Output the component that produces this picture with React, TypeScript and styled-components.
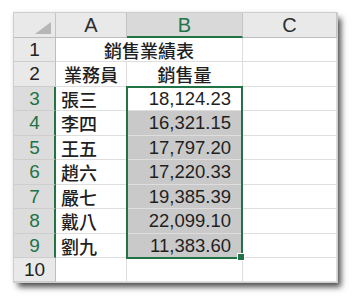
import React from "react";
import styled, { createGlobalStyle } from "styled-components";

const GREEN = "#217346";

const colWidths = [42, 71, 116, 94];
const headerHeight = 25;
const rowHeights = [24, 25, 24, 25, 24, 25, 24, 25, 24, 24];

const rows: { name: string; value: string }[] = [
  { name: "張三", value: "18,124.23" },
  { name: "李四", value: "16,321.15" },
  { name: "王五", value: "17,797.20" },
  { name: "趙六", value: "17,220.33" },
  { name: "嚴七", value: "19,385.39" },
  { name: "戴八", value: "22,099.10" },
  { name: "劉九", value: "11,383.60" },
];

const GlobalStyle = createGlobalStyle`
  html, body {
    margin: 0;
    padding: 0;
    background: #ffffff;
  }
  body {
    font-family: "Liberation Sans", "Noto Sans CJK TC", sans-serif;
  }
`;

const Page = styled.div`
  width: 360px;
  height: 306px;
  padding: 13px 0 0 14px;
  box-sizing: border-box;
  background: #ffffff;
`;

const Sheet = styled.div`
  position: relative;
  display: grid;
  grid-template-columns: ${colWidths.map((w) => `${w}px`).join(" ")};
  grid-template-rows: ${headerHeight}px ${rowHeights.map((h) => `${h}px`).join(" ")};
  width: ${colWidths.reduce((a, b) => a + b, 0)}px;
  background: #ffffff;
  box-shadow: 4px 5px 6px rgba(0, 0, 0, 0.7), -1px -1px 4px rgba(0, 0, 0, 0.08);
  outline: 1px solid #cfcfcf;
`;

const HeaderCell = styled.div<{ $selected?: boolean }>`
  box-sizing: border-box;
  display: flex;
  align-items: center;
  justify-content: center;
  background: ${(p) => (p.$selected ? "#d9d9d9" : "#e9e9e9")};
  border-right: 1px solid #c4c4c4;
  border-bottom: ${(p) => (p.$selected ? `2px solid ${GREEN}` : "1px solid #bdbdbd")};
  color: ${(p) => (p.$selected ? GREEN : "#2e2e2e")};
  font-family: "Liberation Sans", sans-serif;
  font-size: 20px;
  padding-top: 1px;
`;

const Corner = styled.div`
  position: relative;
  box-sizing: border-box;
  background: #e9e9e9;
  border-right: 1px solid #c4c4c4;
  border-bottom: 1px solid #bdbdbd;
`;

const CornerTriangle = styled.div`
  position: absolute;
  right: 4px;
  bottom: 3px;
  width: 0;
  height: 0;
  border-left: 16px solid transparent;
  border-bottom: 12px solid #b6b6b6;
`;

const RowHeader = styled.div<{ $selected?: boolean }>`
  box-sizing: border-box;
  display: flex;
  align-items: center;
  justify-content: center;
  background: ${(p) => (p.$selected ? "#dcdcdc" : "#e9e9e9")};
  border-bottom: 1px solid #cdcdcd;
  border-right: ${(p) => (p.$selected ? `2px solid ${GREEN}` : "1px solid #bdbdbd")};
  color: ${(p) => (p.$selected ? GREEN : "#222222")};
  font-family: "Liberation Sans", sans-serif;
  font-size: 19px;
  padding-left: ${(p) => (p.$selected ? "1px" : "0")};
`;

const Cell = styled.div<{ $align?: "left" | "center" | "right"; $fill?: boolean; $span?: number }>`
  box-sizing: border-box;
  display: flex;
  align-items: center;
  justify-content: ${(p) =>
    p.$align === "right" ? "flex-end" : p.$align === "center" ? "center" : "flex-start"};
  grid-column: ${(p) => (p.$span ? `span ${p.$span}` : "auto")};
  background: ${(p) => (p.$fill ? "#c9c9c9" : "#ffffff")};
  border-right: 1px solid #dedede;
  border-bottom: 1px solid #dedede;
  padding: 0 ${(p) => (p.$align === "right" ? "11px" : "0")} 0
    ${(p) => (p.$align === "left" ? "5px" : "0")};
  color: #1f1f1f;
  font-family: "Noto Sans CJK TC", "Liberation Sans", sans-serif;
  font-size: 18px;
  font-weight: 500;
  white-space: nowrap;
`;

const Number = styled.span`
  font-family: "Liberation Sans", sans-serif;
  font-size: 18.5px;
  font-weight: 400;
`;

const Selection = styled.div`
  position: absolute;
  box-sizing: border-box;
  border: 2px solid ${GREEN};
  pointer-events: none;
`;

const FillHandle = styled.div`
  position: absolute;
  right: -4px;
  bottom: -4px;
  width: 6px;
  height: 6px;
  background: ${GREEN};
  border: 1px solid #ffffff;
`;

const App: React.FC = () => {
  const selTop = headerHeight + rowHeights[0] + rowHeights[1] - 1;
  const selHeight = rowHeights.slice(2, 9).reduce((a, b) => a + b, 0) + 2;
  const selLeft = colWidths[0] + colWidths[1] - 1;
  const selWidth = colWidths[2] + 1;

  return (
    <>
      <GlobalStyle />
      <Page>
        <Sheet>
          <Corner>
            <CornerTriangle />
          </Corner>
          <HeaderCell>A</HeaderCell>
          <HeaderCell $selected>B</HeaderCell>
          <HeaderCell>C</HeaderCell>

          <RowHeader>1</RowHeader>
          <Cell $align="center" $span={2}>
            銷售業績表
          </Cell>
          <Cell />

          <RowHeader>2</RowHeader>
          <Cell $align="center">業務員</Cell>
          <Cell $align="center">銷售量</Cell>
          <Cell />

          {rows.map((r, i) => (
            <React.Fragment key={r.name}>
              <RowHeader $selected>{i + 3}</RowHeader>
              <Cell $align="left">{r.name}</Cell>
              <Cell $align="right" $fill={i > 0}>
                <Number>{r.value}</Number>
              </Cell>
              <Cell />
            </React.Fragment>
          ))}

          <RowHeader>10</RowHeader>
          <Cell />
          <Cell />
          <Cell />

          <Selection
            style={{ top: selTop, left: selLeft, width: selWidth, height: selHeight }}
          >
            <FillHandle />
          </Selection>
        </Sheet>
      </Page>
    </>
  );
};

export default App;
